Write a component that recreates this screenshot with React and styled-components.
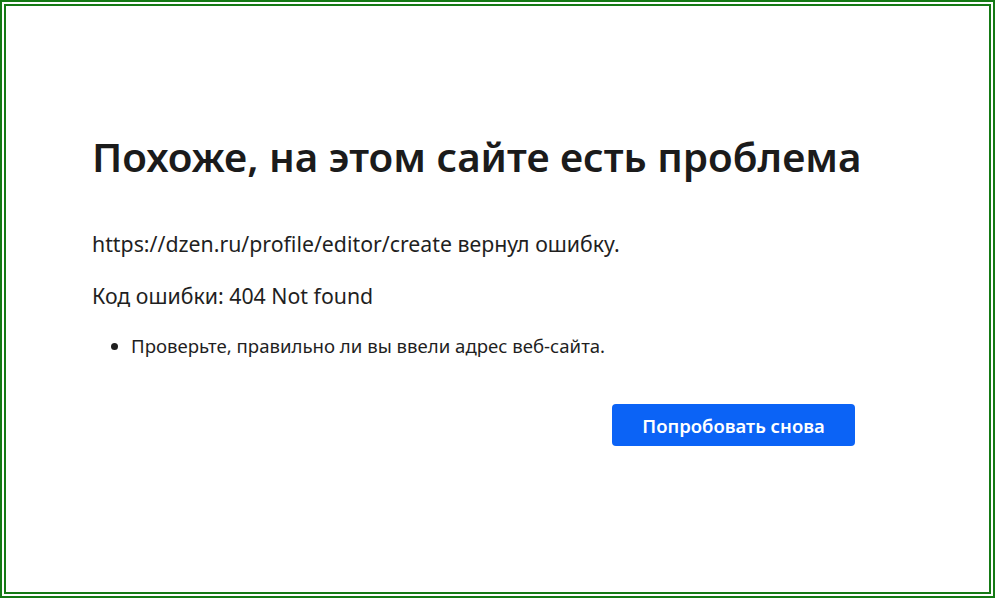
import React from "react";
import styled, { createGlobalStyle } from "styled-components";

const GlobalStyle = createGlobalStyle`
  html, body {
    margin: 0;
    padding: 0;
    background: #ffffff;
  }
  body {
    font-family: "Noto Sans", "Open Sans", sans-serif;
    color: #1f1f1f;
  }
`;

const OuterFrame = styled.div`
  box-sizing: border-box;
  width: 995px;
  height: 598px;
  border: 2px solid #157a15;
  padding: 2px;
`;

const InnerFrame = styled.div`
  box-sizing: border-box;
  height: 100%;
  border: 2px solid #157a15;
  padding: 121px 0 0 86px;
`;

const Content = styled.div`
  width: 763px;
  display: flex;
  flex-direction: column;
`;

const Title = styled.h1`
  margin: 0;
  font-size: 40.4px;
  font-weight: 600;
  line-height: 60px;
  color: #1b1b1b;
  white-space: nowrap;
`;

const Text = styled.p`
  margin: ${(props) => props.top}px 0 0;
  font-size: 21.3px;
  line-height: 28px;
  color: #1f1f1f;
  white-space: nowrap;
`;

const Hints = styled.ul`
  margin: 23px 0 0;
  padding-left: 39px;
  font-size: 18.6px;
  line-height: 26px;
  color: #1f1f1f;
  white-space: nowrap;
`;

const Actions = styled.div`
  display: flex;
  justify-content: flex-end;
  margin-top: 45px;
`;

const RetryButton = styled.button`
  width: 243px;
  height: 42px;
  border: none;
  border-radius: 4px;
  background: #0b63f6;
  color: #ffffff;
  font-family: "Noto Sans", sans-serif;
  font-size: 18.5px;
  font-weight: 600;
  cursor: pointer;
`;

const App = () => {
  return (
    <>
      <GlobalStyle />
      <OuterFrame>
        <InnerFrame>
          <Content>
            <Title>Похоже, на этом сайте есть проблема</Title>
            <Text top={43}>https://dzen.ru/profile/editor/create вернул ошибку.</Text>
            <Text top={24}>Код ошибки: 404 Not found</Text>
            <Hints>
              <li>Проверьте, правильно ли вы ввели адрес веб-сайта.</li>
            </Hints>
            <Actions>
              <RetryButton>Попробовать снова</RetryButton>
            </Actions>
          </Content>
        </InnerFrame>
      </OuterFrame>
    </>
  );
};

export default App;
